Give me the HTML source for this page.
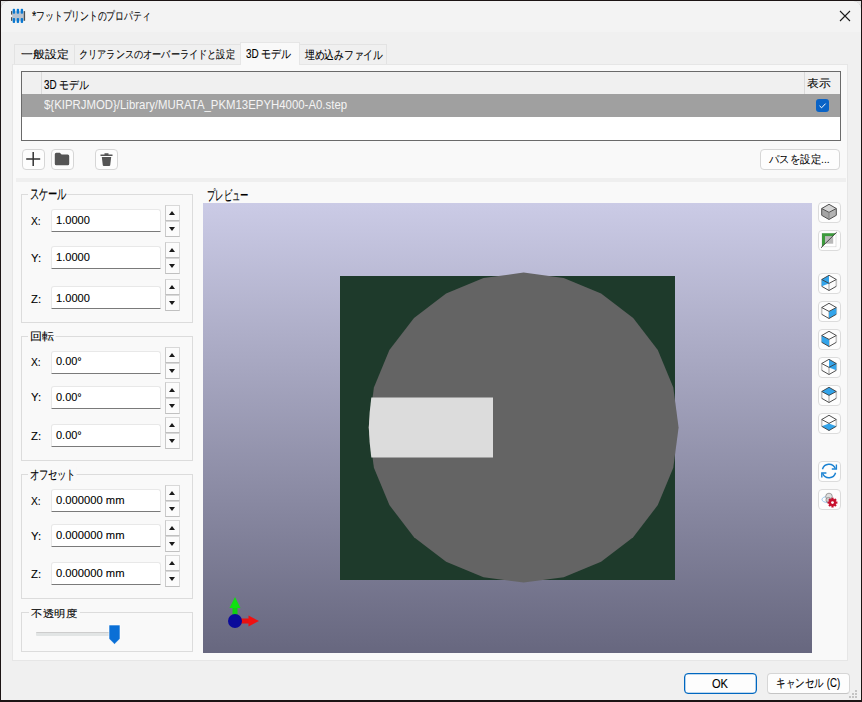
<!DOCTYPE html>
<html><head><meta charset="utf-8">
<style>
*{box-sizing:border-box}
html,body{margin:0;padding:0;width:862px;height:702px;overflow:hidden;background:#1c1414}
body{font-family:"Liberation Sans",sans-serif;font-size:12px;color:#1b1b1b;position:relative}
.a{position:absolute}
.t{position:absolute;white-space:nowrap;line-height:14px;transform-origin:0 0;color:#000;-webkit-text-stroke:0.1px currentColor}
#win{position:absolute;left:1px;top:1px;width:860px;height:699px;background:#f0f0f0}
#tb{position:absolute;left:1px;top:1px;width:860px;height:31px;background:#f3f3f3}
.tab{position:absolute;background:#f0f0f0;border:1px solid #e3e3e3;border-bottom:none}
.tabsel{background:#f9f9f9;border:1px solid #e6e6e6;border-bottom:none}
#pane{position:absolute;left:12px;top:64px;width:836px;height:597px;background:#f9f9f9;border:1px solid #e6e6e6}
.btn{position:absolute;background:#fdfdfd;border:1px solid #d6d6d6;border-radius:4px}
.grp{position:absolute;border:1px solid #dcdcdc}
.gt{position:absolute;background:#f9f9f9;padding:0 2px}
.inp{position:absolute;left:51px;width:110px;height:23px;background:#fff;border:1px solid #e8e8e8;border-bottom:1px solid #7a7a7a;border-radius:3px 3px 0 0}
.spin{position:absolute;left:165px;width:15px;height:16px;background:#fbfbfb;border:1px solid #d8d8d8;border-left-color:#cacaca;border-bottom-color:#c0c0c0}
.tu{position:absolute;left:3px;top:4.5px;width:0;height:0;border-left:3.5px solid transparent;border-right:3.5px solid transparent;border-bottom:4px solid #1b1b1b}
.td{position:absolute;left:3px;top:5px;width:0;height:0;border-left:3.5px solid transparent;border-right:3.5px solid transparent;border-top:4px solid #1b1b1b}
.ib{position:absolute;left:818px;width:23px;height:21px;background:#fdfdfd;border:1px solid #dcdcdc;border-radius:4px}
.ib svg{position:absolute;left:3px;top:2px}
</style></head><body>
<div id="win"></div>
<div id="tb"></div>
<svg class="a" style="left:1px;top:1px" width="860" height="10"><rect x="0" y="0" width="6" height="6" fill="#e4e4e4"/><path d="M0.5 7.5A7 7 0 0 1 7.5 0.5" fill="none" stroke="#b0b0b0" stroke-width="1"/><path d="M0 8A8 8 0 0 1 8 0V8Z" fill="#f3f3f3"/><rect x="854" y="0" width="6" height="6" fill="#e4e4e4"/><path d="M852.5 0.5A7 7 0 0 1 859.5 7.5" fill="none" stroke="#b0b0b0" stroke-width="1"/><path d="M852 0A8 8 0 0 1 860 8H852Z" fill="#f3f3f3"/></svg>

<!-- title -->
<svg class="a" style="left:8px;top:6px" width="20" height="20">
  <rect x="3.7" y="5.1" width="12.3" height="9.7" fill="#b6c2d0"/>
  <rect x="3" y="5.1" width="1.1" height="9.7" fill="#505050"/>
  <rect x="15.8" y="5.1" width="1.3" height="9.7" fill="#505050"/>
  <circle cx="3.2" cy="9.9" r="1.3" fill="#f3f3f3"/>
  <rect x="4.7" y="2.8" width="2.4" height="5" rx="1" fill="#0a78d0"/>
  <rect x="8.7" y="2.8" width="2.4" height="5" rx="1" fill="#0a78d0"/>
  <rect x="12.7" y="2.8" width="2.4" height="5" rx="1" fill="#0a78d0"/>
  <rect x="4.7" y="12" width="2.4" height="5" rx="1" fill="#0a78d0"/>
  <rect x="8.7" y="12" width="2.4" height="5" rx="1" fill="#0a78d0"/>
  <rect x="12.7" y="12" width="2.4" height="5" rx="1" fill="#0a78d0"/>
</svg>
<div class="t" id="title" style="left:31.61px;top:8.39px;transform:scale(0.7314,1.0000)"><span style="font-size:15px;position:relative;top:1px">*</span>フットプリントのプロパティ</div>
<svg class="a" style="left:839px;top:10px" width="12" height="12" viewBox="0 0 12 12">
  <path d="M1 1L11 11M11 1L1 11" stroke="#1b1b1b" stroke-width="1.1"/>
</svg>

<!-- tabs -->
<div class="tab" style="left:14px;top:44px;width:61px;height:20px"></div>
<div class="tab" style="left:74px;top:44px;width:167px;height:20px"></div>
<div class="tab" style="left:299px;top:44px;width:88px;height:20px"></div>
<div id="pane"></div>
<div class="tab tabsel" style="left:240px;top:42px;width:60px;height:23px"></div>
<div class="t" id="tab1" style="left:20.59px;top:48.08px;transform:scale(0.9936,0.9167)">一般設定</div>
<div class="t" id="tab2" style="left:78.76px;top:48.08px;transform:scale(0.7637,0.9167)">クリアランスのオーバーライドと設定</div>
<div class="t" id="tab3" style="left:246.17px;top:47.19px;transform:scale(0.8296,1.0000)">3D モデル</div>
<div class="t" id="tab4" style="left:304.54px;top:48.00px;transform:scale(0.8115,1.0000)">埋め込みファイル</div>

<!-- table -->
<div class="a" style="left:21px;top:71px;width:820px;height:70px;background:#fff;border:1px solid #6a6a6a"></div>
<div class="a" style="left:22px;top:72px;width:818px;height:22px;background:#f0f0f0"></div>
<div class="a" style="left:41px;top:72px;width:1px;height:22px;background:#dadada"></div>
<div class="a" style="left:804px;top:72px;width:1px;height:22px;background:#dadada"></div>
<div class="t" id="h1" style="left:43.72px;top:77.60px;transform:scale(0.8222,1.0000)">3D モデル</div>
<div class="t" id="h2" style="left:806.79px;top:77.06px;transform:scale(1.0087,0.9417)">表示</div>
<div class="a" style="left:22px;top:94px;width:818px;height:23px;background:#a0a0a0"></div>
<div class="t" id="path" style="left:44.02px;top:98.17px;transform:scale(0.9500,1.0083);color:#f4f4f4;-webkit-text-stroke:0">${KIPRJMOD}/Library/MURATA_PKM13EPYH4000-A0.step</div>
<div class="a" style="left:816px;top:99px;width:13px;height:13px;background:#0a63c6;border-radius:3px"></div>
<svg class="a" style="left:816px;top:99px" width="13" height="13" viewBox="0 0 13 13"><path d="M3.5 6.8L5.6 8.8L9.6 4.6" fill="none" stroke="#fff" stroke-width="1"/></svg>

<!-- buttons row -->
<div class="btn" style="left:22px;top:149px;width:23px;height:21px"></div>
<svg class="a" style="left:22px;top:149px" width="23" height="21"><path d="M11.2 3V17M4.2 10H18.2" stroke="#333" stroke-width="1.5"/></svg>
<div class="btn" style="left:51px;top:149px;width:23px;height:21px"></div>
<svg class="a" style="left:51px;top:149px" width="23" height="21"><path d="M3.8 5.2Q3.8 3.7 5.3 3.7H8.8L10.6 5.4H16.7Q18.2 5.4 18.2 6.9V14.7Q18.2 16.2 16.7 16.2H5.3Q3.8 16.2 3.8 14.7Z" fill="#555"/></svg>
<div class="btn" style="left:95px;top:149px;width:23px;height:21px"></div>
<svg class="a" style="left:95px;top:149px" width="23" height="21" viewBox="0 0 23 21"><path d="M5.5 5.5H17.5V7H5.5Z M9.5 4.3H13.5V5.5H9.5Z M6.8 8H16.2L15.2 16.2Q15 17 14.2 17H8.8Q8 17 7.8 16.2Z" fill="#555"/></svg>
<div class="btn" style="left:760px;top:149px;width:80px;height:21px"></div>
<div class="t" id="pathbtn" style="left:769.18px;top:152.87px;transform:scale(0.8667,0.9250)">パスを設定...</div>

<!-- separator -->
<div class="a" style="left:16px;top:178px;width:830px;height:4px;background:#efefef"></div>

<!-- groups -->
<div class="grp" style="left:21px;top:194px;width:172px;height:129px"></div>
<div class="t gt" id="g1" style="left:28.07px;top:186.00px;transform:scale(0.7574,1.2222)">スケール</div>
<div class="grp" style="left:21px;top:336px;width:172px;height:125px"></div>
<div class="t gt" id="g2" style="left:27.64px;top:330.10px;transform:scale(0.9870,0.9000)">回転</div>
<div class="grp" style="left:21px;top:474px;width:172px;height:125px"></div>
<div class="t gt" id="g3" style="left:28.42px;top:467.27px;transform:scale(0.7589,1.0500)">オフセット</div>
<div class="grp" style="left:21px;top:612px;width:172px;height:40px"></div>
<div class="t gt" id="g4" style="left:28.82px;top:606.56px;transform:scale(0.9792,0.8667)">不透明度</div>
<div class="inp" style="top:209px"></div>
<div class="spin" style="top:205px;height:16px"><div class="tu"></div></div>
<div class="spin" style="top:221px;height:16px"><div class="td"></div></div>
<div class="t" id="l0" style="left:31.00px;top:214.07px;transform:scale(0.8545,0.9667)">X:</div>
<div class="t" id="v0" style="left:55.88px;top:214.11px;transform:scale(0.9229,0.9444)">1.0000</div>
<div class="inp" style="top:246px"></div>
<div class="spin" style="top:242px;height:16px"><div class="tu"></div></div>
<div class="spin" style="top:258px;height:16px"><div class="td"></div></div>
<div class="t" id="l1" style="left:31.00px;top:251.45px;transform:scale(0.9400,0.9667)">Y:</div>
<div class="t" id="v1" style="left:55.88px;top:251.49px;transform:scale(0.9229,0.9444)">1.0000</div>
<div class="inp" style="top:286px"></div>
<div class="spin" style="top:279px;height:16px"><div class="tu"></div></div>
<div class="spin" style="top:295px;height:16px"><div class="td"></div></div>
<div class="t" id="l2" style="left:31.00px;top:291.65px;transform:scale(0.9400,0.9667)">Z:</div>
<div class="t" id="v2" style="left:55.88px;top:291.69px;transform:scale(0.9229,0.9444)">1.0000</div>
<div class="inp" style="top:351px"></div>
<div class="spin" style="top:347px;height:16px"><div class="tu"></div></div>
<div class="spin" style="top:363px;height:16px"><div class="td"></div></div>
<div class="t" id="l3" style="left:31.00px;top:355.27px;transform:scale(0.8545,0.9667)">X:</div>
<div class="t" id="v3" style="left:55.66px;top:355.33px;transform:scale(0.9148,0.9444)">0.00°</div>
<div class="inp" style="top:386px"></div>
<div class="spin" style="top:382px;height:16px"><div class="tu"></div></div>
<div class="spin" style="top:398px;height:16px"><div class="td"></div></div>
<div class="t" id="l4" style="left:31.00px;top:390.46px;transform:scale(0.9400,0.9667)">Y:</div>
<div class="t" id="v4" style="left:55.66px;top:390.52px;transform:scale(0.9148,0.9444)">0.00°</div>
<div class="inp" style="top:424px"></div>
<div class="spin" style="top:417px;height:16px"><div class="tu"></div></div>
<div class="spin" style="top:433px;height:16px"><div class="td"></div></div>
<div class="t" id="l5" style="left:31.00px;top:428.67px;transform:scale(0.9400,0.9667)">Z:</div>
<div class="t" id="v5" style="left:55.66px;top:428.72px;transform:scale(0.9148,0.9444)">0.00°</div>
<div class="inp" style="top:489px"></div>
<div class="spin" style="top:485px;height:16px"><div class="tu"></div></div>
<div class="spin" style="top:501px;height:16px"><div class="td"></div></div>
<div class="t" id="l6" style="left:31.00px;top:494.07px;transform:scale(0.8545,0.9667)">X:</div>
<div class="t" id="v6" style="left:56.03px;top:494.11px;transform:scale(0.9333,0.9444)">0.000000 mm</div>
<div class="inp" style="top:524px"></div>
<div class="spin" style="top:520px;height:16px"><div class="tu"></div></div>
<div class="spin" style="top:536px;height:16px"><div class="td"></div></div>
<div class="t" id="l7" style="left:31.00px;top:529.07px;transform:scale(0.9400,0.9667)">Y:</div>
<div class="t" id="v7" style="left:56.03px;top:529.11px;transform:scale(0.9333,0.9444)">0.000000 mm</div>
<div class="inp" style="top:562px"></div>
<div class="spin" style="top:555px;height:16px"><div class="tu"></div></div>
<div class="spin" style="top:571px;height:16px"><div class="td"></div></div>
<div class="t" id="l8" style="left:31.00px;top:567.26px;transform:scale(0.9400,0.9667)">Z:</div>
<div class="t" id="v8" style="left:56.03px;top:567.30px;transform:scale(0.9333,0.9444)">0.000000 mm</div>

<!-- slider -->
<div class="a" style="left:36px;top:632px;width:74px;height:4px;background:#e2e5e5;border-top:1px solid #cdcdcd;border-radius:1px"></div>
<svg class="a" style="left:108px;top:624px" width="14" height="22"><path d="M1 1H12V14.8L6.5 20.2L1 14.8Z" fill="#0a6fd6" stroke="#fff" stroke-width="0.6"/></svg>

<!-- preview -->
<div class="t" id="prev" style="left:207.47px;top:186.70px;transform:scale(0.6879,1.1455)">プレビュー</div>
<svg class="a" style="left:203px;top:203px" width="609" height="450" viewBox="203 203 609 450">
  <defs><linearGradient id="bg" x1="0" y1="0" x2="0" y2="1"><stop offset="0" stop-color="#cbcbe6"/><stop offset="1" stop-color="#67677f"/></linearGradient></defs>
  <rect x="203" y="203" width="609" height="450" fill="url(#bg)"/>
  <rect x="340" y="276" width="335" height="304" fill="#1e3a2b"/>
  <polygon fill="#646464" points="678.6,427.6 673.3,387.5 657.8,350.1 633.2,318.0 601.1,293.4 563.7,277.9 523.6,272.6 483.5,277.9 446.1,293.4 414.0,318.0 389.4,350.1 373.9,387.5 368.6,427.6 373.9,467.7 389.4,505.1 414.0,537.2 446.1,561.8 483.5,577.3 523.6,582.6 563.7,577.3 601.1,561.8 633.2,537.2 657.8,505.1 673.3,467.7"/>
  <polygon points="371.3,397.6 493,397.6 493,457.6 371.3,457.6 369.6,442 368.8,427.6 369.6,413" fill="#dcdcdc"/>
  <!-- axes -->
  <rect x="232.5" y="606" width="5" height="10" fill="#10d010"/>
  <path d="M235 597L240.5 608H229.5Z" fill="#10e010"/>
  <rect x="240" y="618.5" width="9" height="5" fill="#e81010"/>
  <path d="M259 621L248.5 615.5V626.5Z" fill="#f01010"/>
  <circle cx="235" cy="621" r="7" fill="#0a0a9a"/>
</svg>
<div class="ib" style="top:202px"></div><svg class="a" style="left:818px;top:202px" width="23" height="21"><polygon points="11,2.3 18.3,6.5 11,10.4 3.7,6.5" fill="#d4d4d4"/><polygon points="3.7,6.5 11,10.4 11,17.5 3.7,13.3" fill="#a4a4a4"/><polygon points="18.3,6.5 18.3,13.3 11,17.5 11,10.4" fill="#b4b4b4"/><polygon points="11,2.3 18.3,6.5 18.3,13.3 11,17.5 3.7,13.3 3.7,6.5" fill="none" stroke="#505050" stroke-width="1"/><line x1="3.7" y1="6.5" x2="11" y2="10.4" stroke="#505050" stroke-width="1"/><line x1="11" y1="10.4" x2="18.3" y2="6.5" stroke="#505050" stroke-width="1"/><line x1="11" y1="10.4" x2="11" y2="17.5" stroke="#808080" stroke-width="1"/></svg>
<div class="ib" style="top:230px"></div><svg class="a" style="left:818px;top:230px" width="23" height="21"><rect x="4" y="3.3" width="14" height="13.5" fill="#fff" stroke="#d0d0d0" stroke-width="0.6"/><polygon points="4,3.3 18,3.3 4,16.8" fill="#3c9a3c"/><rect x="7" y="6.1" width="8.2" height="7.6" fill="#b8b8b8"/><line x1="3" y1="17.8" x2="18.7" y2="2.2" stroke="#3a3a3a" stroke-width="0.9"/></svg>
<div class="ib" style="top:273px"></div><svg class="a" style="left:818px;top:273px" width="23" height="21"><line x1="18.3" y1="6.5" x2="18.3" y2="13.3" stroke="#c4c4c4" stroke-width="1.6"/><line x1="3.7" y1="6.5" x2="3.7" y2="13.3" stroke="#c4c4c4" stroke-width="1.6"/><line x1="11" y1="10.4" x2="11" y2="17.5" stroke="#c4c4c4" stroke-width="1.6"/><polygon points="11,2.3 3.7,6.5 3.7,13.3 11,10.4" fill="#33a4ea"/><polyline points="3.7,13.3 11,17.5 18.3,13.3" fill="none" stroke="#3c3c3c" stroke-width="0.9"/><polyline points="3.7,6.5 11,2.3 18.3,6.5" fill="none" stroke="#3c3c3c" stroke-width="0.9"/><polyline points="3.7,6.5 11,10.4 18.3,6.5" fill="none" stroke="#3c3c3c" stroke-width="0.9"/></svg>
<div class="ib" style="top:301px"></div><svg class="a" style="left:818px;top:301px" width="23" height="21"><line x1="18.3" y1="6.5" x2="18.3" y2="13.3" stroke="#c4c4c4" stroke-width="1.6"/><line x1="3.7" y1="6.5" x2="3.7" y2="13.3" stroke="#c4c4c4" stroke-width="1.6"/><line x1="11" y1="10.4" x2="11" y2="17.5" stroke="#c4c4c4" stroke-width="1.6"/><polygon points="18.3,6.5 18.3,13.3 11,17.5 11,10.4" fill="#33a4ea"/><polyline points="3.7,13.3 11,17.5 18.3,13.3" fill="none" stroke="#3c3c3c" stroke-width="0.9"/><polyline points="3.7,6.5 11,2.3 18.3,6.5" fill="none" stroke="#3c3c3c" stroke-width="0.9"/><polyline points="3.7,6.5 11,10.4 18.3,6.5" fill="none" stroke="#3c3c3c" stroke-width="0.9"/></svg>
<div class="ib" style="top:329px"></div><svg class="a" style="left:818px;top:329px" width="23" height="21"><line x1="18.3" y1="6.5" x2="18.3" y2="13.3" stroke="#c4c4c4" stroke-width="1.6"/><line x1="3.7" y1="6.5" x2="3.7" y2="13.3" stroke="#c4c4c4" stroke-width="1.6"/><line x1="11" y1="10.4" x2="11" y2="17.5" stroke="#c4c4c4" stroke-width="1.6"/><polygon points="3.7,6.5 11,10.4 11,17.5 3.7,13.3" fill="#33a4ea"/><polyline points="3.7,13.3 11,17.5 18.3,13.3" fill="none" stroke="#3c3c3c" stroke-width="0.9"/><polyline points="3.7,6.5 11,2.3 18.3,6.5" fill="none" stroke="#3c3c3c" stroke-width="0.9"/><polyline points="3.7,6.5 11,10.4 18.3,6.5" fill="none" stroke="#3c3c3c" stroke-width="0.9"/></svg>
<div class="ib" style="top:357px"></div><svg class="a" style="left:818px;top:357px" width="23" height="21"><line x1="18.3" y1="6.5" x2="18.3" y2="13.3" stroke="#c4c4c4" stroke-width="1.6"/><line x1="3.7" y1="6.5" x2="3.7" y2="13.3" stroke="#c4c4c4" stroke-width="1.6"/><line x1="11" y1="10.4" x2="11" y2="17.5" stroke="#c4c4c4" stroke-width="1.6"/><polygon points="11,2.3 18.3,6.5 18.3,13.3 11,10.4" fill="#33a4ea"/><polyline points="3.7,13.3 11,17.5 18.3,13.3" fill="none" stroke="#3c3c3c" stroke-width="0.9"/><polyline points="3.7,6.5 11,2.3 18.3,6.5" fill="none" stroke="#3c3c3c" stroke-width="0.9"/><polyline points="3.7,6.5 11,10.4 18.3,6.5" fill="none" stroke="#3c3c3c" stroke-width="0.9"/></svg>
<div class="ib" style="top:385px"></div><svg class="a" style="left:818px;top:385px" width="23" height="21"><line x1="18.3" y1="6.5" x2="18.3" y2="13.3" stroke="#c4c4c4" stroke-width="1.6"/><line x1="3.7" y1="6.5" x2="3.7" y2="13.3" stroke="#c4c4c4" stroke-width="1.6"/><line x1="11" y1="10.4" x2="11" y2="17.5" stroke="#c4c4c4" stroke-width="1.6"/><polygon points="11,2.3 18.3,6.5 11,10.4 3.7,6.5" fill="#33a4ea"/><polyline points="3.7,13.3 11,17.5 18.3,13.3" fill="none" stroke="#3c3c3c" stroke-width="0.9"/><polyline points="3.7,6.5 11,2.3 18.3,6.5" fill="none" stroke="#3c3c3c" stroke-width="0.9"/><polyline points="3.7,6.5 11,10.4 18.3,6.5" fill="none" stroke="#3c3c3c" stroke-width="0.9"/></svg>
<div class="ib" style="top:413px"></div><svg class="a" style="left:818px;top:413px" width="23" height="21"><line x1="18.3" y1="6.5" x2="18.3" y2="13.3" stroke="#c4c4c4" stroke-width="1.6"/><line x1="3.7" y1="6.5" x2="3.7" y2="13.3" stroke="#c4c4c4" stroke-width="1.6"/><line x1="11" y1="10.4" x2="11" y2="17.5" stroke="#c4c4c4" stroke-width="1.6"/><polygon points="3.7,13.3 11,10.4 18.3,13.3 11,17.5" fill="#33a4ea"/><polyline points="3.7,13.3 11,17.5 18.3,13.3" fill="none" stroke="#3c3c3c" stroke-width="0.9"/><polyline points="3.7,6.5 11,2.3 18.3,6.5" fill="none" stroke="#3c3c3c" stroke-width="0.9"/><polyline points="3.7,6.5 11,10.4 18.3,6.5" fill="none" stroke="#3c3c3c" stroke-width="0.9"/></svg>
<div class="ib" style="top:461px"></div><svg class="a" style="left:818px;top:461px" width="23" height="21"><path d="M4.43 8.24A6.8 6.8 0 0 1 17.30 7.45" fill="none" stroke="#1b82d2" stroke-width="1.4"/><path d="M17.57 11.76A6.8 6.8 0 0 1 4.70 12.55" fill="none" stroke="#1b82d2" stroke-width="1.4"/><path d="M13.8 8H18.4V3.4" fill="none" stroke="#1b82d2" stroke-width="1.4"/><path d="M8.4 12H3.8V16.4" fill="none" stroke="#1b82d2" stroke-width="1.4"/></svg>
<div class="ib" style="top:489px"></div><svg class="a" style="left:818px;top:489px" width="23" height="21"><ellipse cx="9.5" cy="10.5" rx="5.5" ry="3" fill="none" stroke="#8ec0ea" stroke-width="0.9"/><circle cx="11" cy="7.5" r="3.3" fill="#e0e0e0" stroke="#8a8a8a" stroke-width="0.8"/><circle cx="10.5" cy="11" r="2.6" fill="#cfcfcf" stroke="#808080" stroke-width="0.7"/><g transform="translate(14.5,13.6)"><circle r="3.5" fill="#c8102e"/><rect x="-1.1" y="-4.9" width="2.2" height="2.5" fill="#c8102e" transform="rotate(0)"/><rect x="-1.1" y="-4.9" width="2.2" height="2.5" fill="#c8102e" transform="rotate(45)"/><rect x="-1.1" y="-4.9" width="2.2" height="2.5" fill="#c8102e" transform="rotate(90)"/><rect x="-1.1" y="-4.9" width="2.2" height="2.5" fill="#c8102e" transform="rotate(135)"/><rect x="-1.1" y="-4.9" width="2.2" height="2.5" fill="#c8102e" transform="rotate(180)"/><rect x="-1.1" y="-4.9" width="2.2" height="2.5" fill="#c8102e" transform="rotate(225)"/><rect x="-1.1" y="-4.9" width="2.2" height="2.5" fill="#c8102e" transform="rotate(270)"/><rect x="-1.1" y="-4.9" width="2.2" height="2.5" fill="#c8102e" transform="rotate(315)"/><circle r="1.4" fill="#fdfdfd"/></g></svg>

<!-- bottom buttons -->
<div class="a" style="left:684px;top:673px;width:73px;height:21px;background:#fdfdfd;border:1px solid #0067c0;border-radius:4px;box-shadow:inset 0 0 0 0.3px #0067c0"></div>
<div class="t" id="ok" style="left:712.00px;top:677.00px;transform:scale(0.9235,1.0000)">OK</div>
<div class="a" style="left:767px;top:673px;width:83px;height:21px;background:#fdfdfd;border:1px solid #d6d6d6;border-bottom-color:#c4c4c4;border-radius:4px"></div>
<div class="t" id="cancel" style="left:775.55px;top:675.56px;transform:scale(0.8013,1.0167)">キャンセル (C)</div>
<svg class="a" style="left:847px;top:689px" width="12" height="12" viewBox="0 0 12 12" fill="#c4c4c4"><rect x="8" y="1" width="2" height="2"/><rect x="5" y="4" width="2" height="2"/><rect x="8" y="4" width="2" height="2"/><rect x="2" y="7" width="2" height="2"/><rect x="5" y="7" width="2" height="2"/><rect x="8" y="7" width="2" height="2"/></svg>
</body></html>
